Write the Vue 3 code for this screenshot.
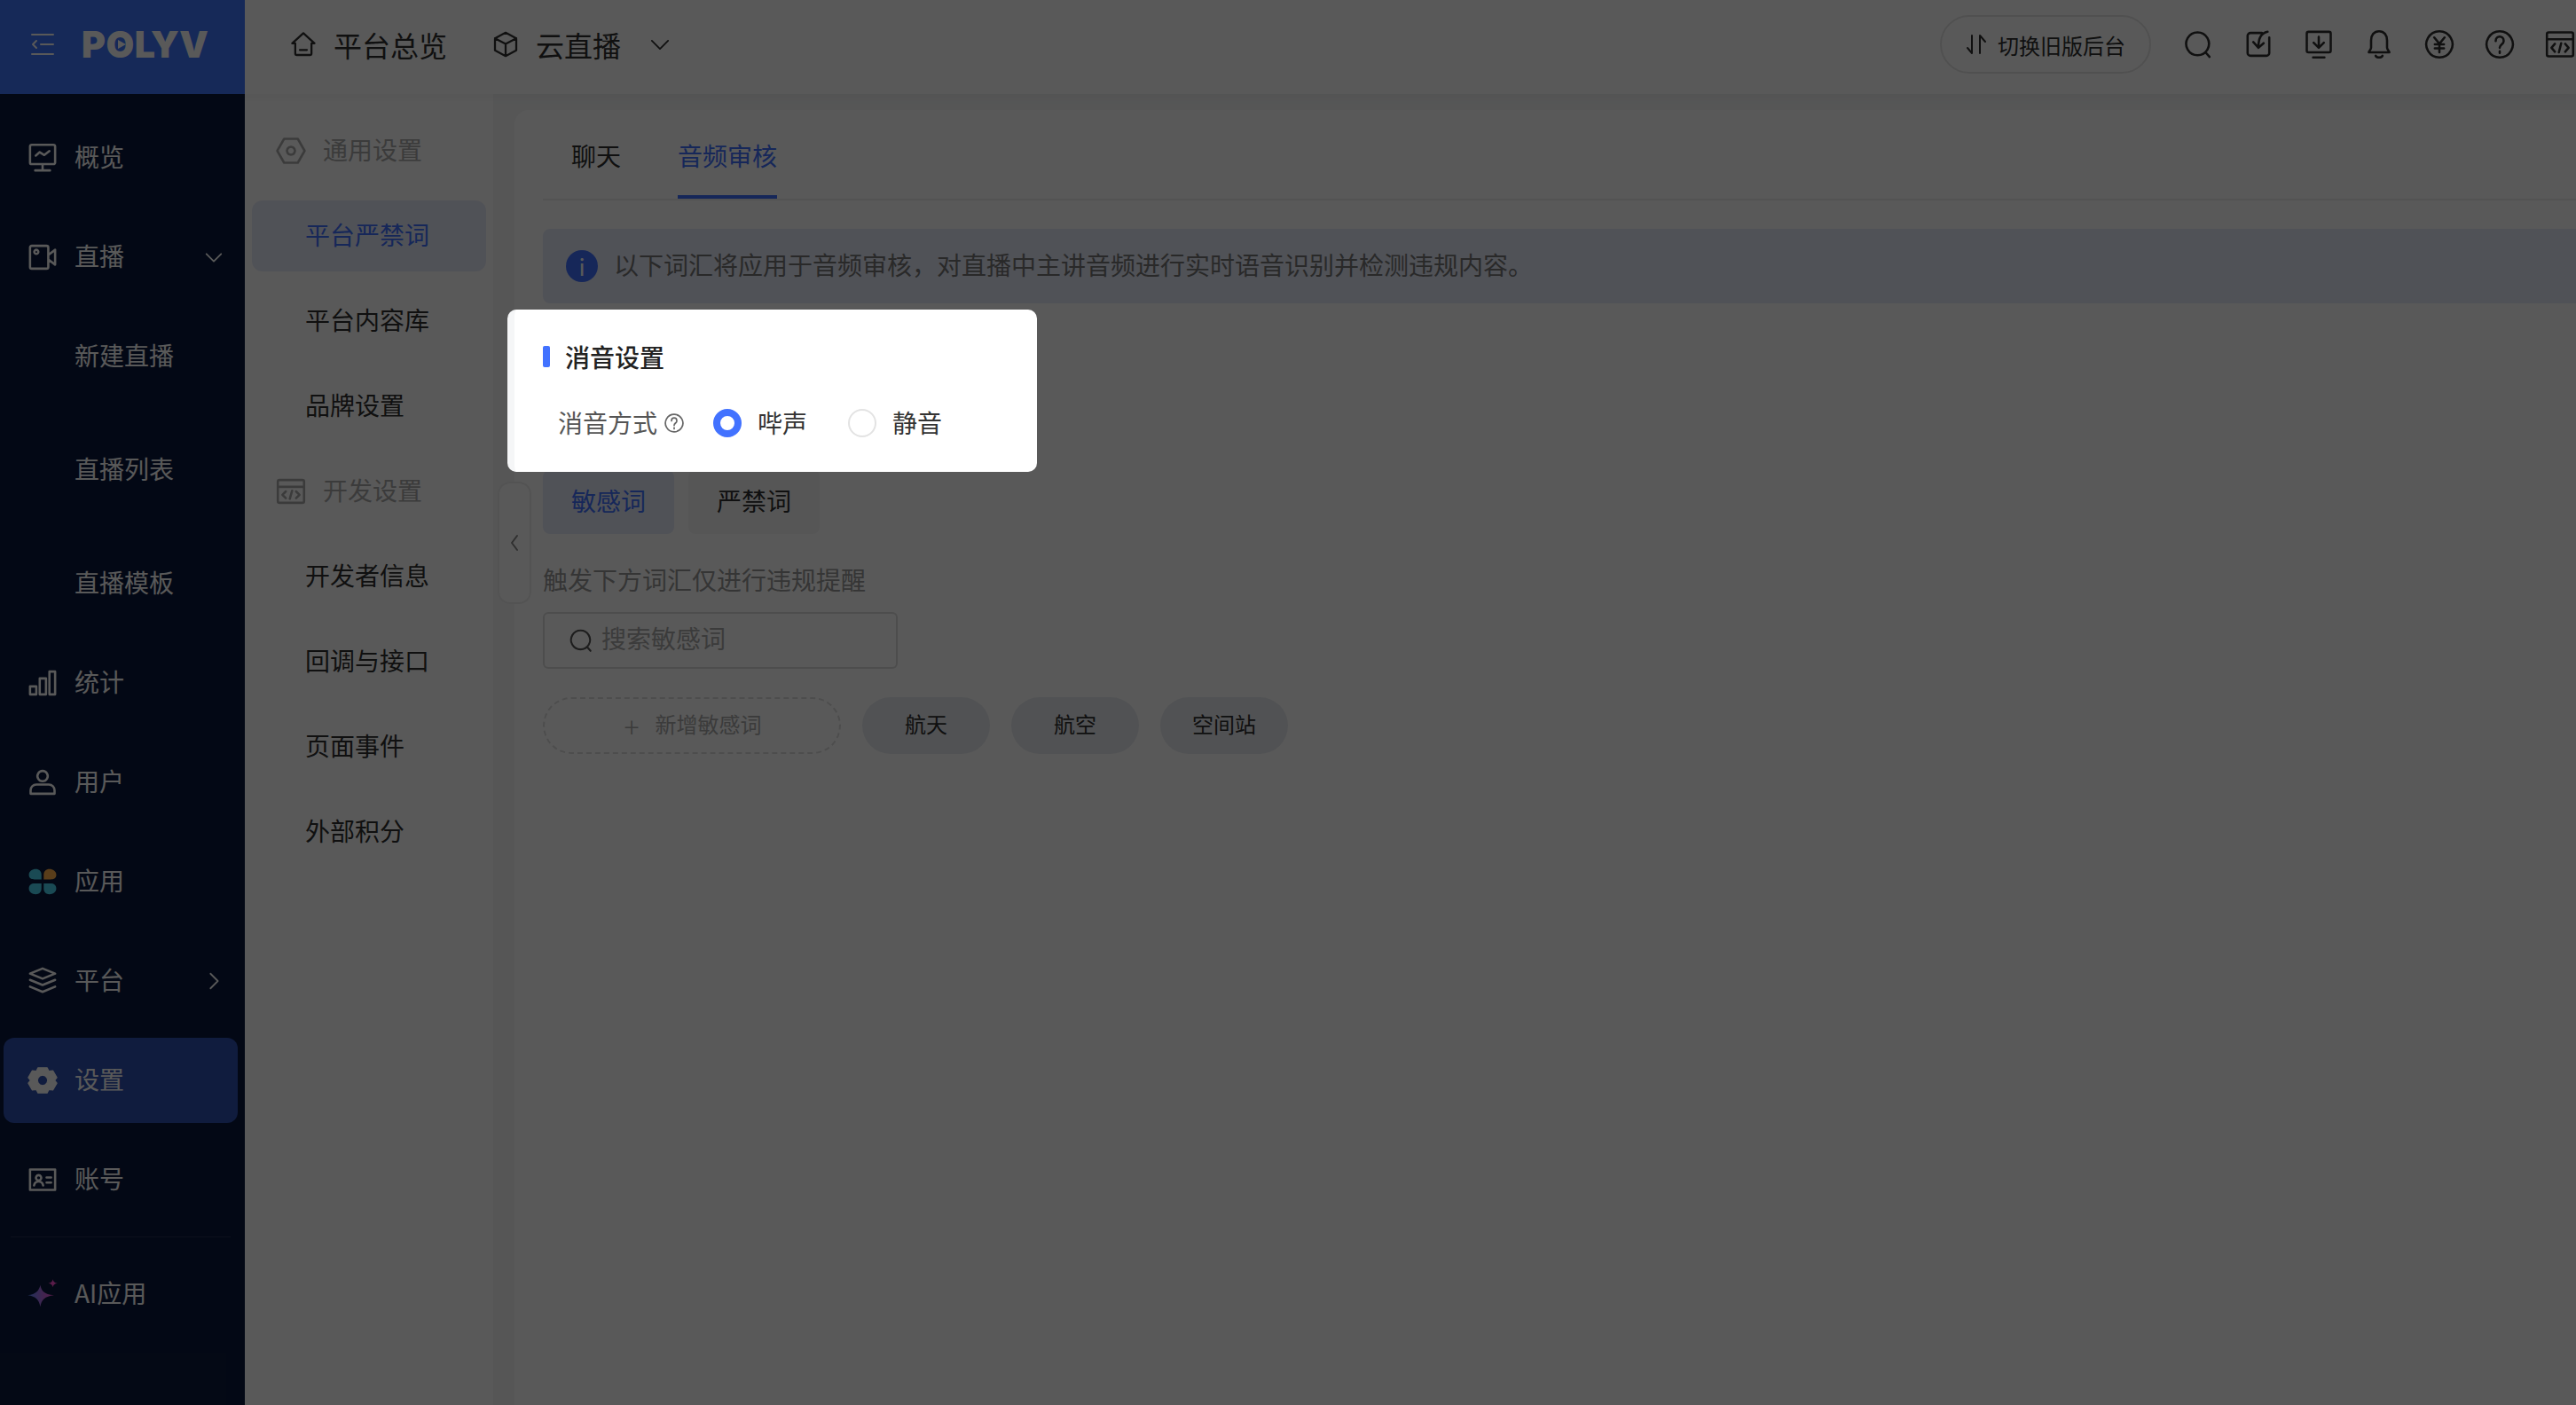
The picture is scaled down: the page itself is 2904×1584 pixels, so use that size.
<script setup>
const navTop = [
  { label: '概览', icon: 'M4.500 2.500h19a1.500 1.500 0 0 1 1.500 1.500v14a1.500 1.500 0 0 1-1.500 1.500h-19A1.500 1.500 0 0 1 3 18V4a1.500 1.500 0 0 1 1.500-1.500zM14 19.500V25M7.500 25h13M8 12l3.500-3 4 2.500 4.500-3.500' },
  { label: '直播', arrow: 'down', icon: 'M4.500 4h13a1.500 1.500 0 0 1 1.500 1.500v17a1.500 1.500 0 0 1-1.500 1.500h-13A1.500 1.500 0 0 1 3 22.500v-17A1.500 1.500 0 0 1 4.500 4zM19 12l6-4.500v13l-6-4.500M8.500 7.500a1.800 1.800 0 1 0 .01 0z' },
];
const navSub = ['新建直播', '直播列表', '直播模板'];
const navBottom = [
  { label: '统计', icon: 'M3 17h5.500v7H3zM11.500 10h5.500v14h-5.500zM20 4h5v20h-5z' },
  { label: '用户', icon: 'M14 4a4.500 4.500 0 1 0 .01 0zM3.500 24v-3a5 5 0 0 1 5-5h11a5 5 0 0 1 5 5v3z' },
  { label: '应用', kind: 'apps' },
  { label: '平台', arrow: 'right', icon: 'M14 3l11 4.500-11 4.500L3 7.500zM3 13l11 4.500L25 13M3 19l11 4.500L25 19' },
  { label: '设置', kind: 'gear', active: true },
  { label: '账号', divider: true, icon: 'M3 5h22v18H3zM10.500 10a2.300 2.300 0 1 0 .01 0zM6.500 19c.5-2.500 2-3.500 4-3.500s3.500 1 4 3.500M17.500 12h4M17.500 16.500h4' },
  { label: 'AI应用', kind: 'ai' },
];
const subGroups = [
  {
    title: '通用设置',
    icon: 'M8 3.500h12L26 14l-6 10.500H8L2 14zM14 10.500a3.500 3.500 0 1 0 .01 0z',
    items: ['平台严禁词', '平台内容库', '品牌设置'],
  },
  {
    title: '开发设置',
    icon: 'M4 4h20a1.500 1.500 0 0 1 1.500 1.500v17a1.500 1.500 0 0 1-1.500 1.500H4a1.500 1.500 0 0 1-1.500-1.500v-17A1.500 1.500 0 0 1 4 4zM2.500 10h23M9.500 14l-3 3 3 3M18.500 14l3 3-3 3M15 13.500l-2 7',
    items: ['开发者信息', '回调与接口', '页面事件', '外部积分'],
  },
];
const tools = [
  'M13.500 3.500a10 10 0 1 0 .01 0zM20.500 21l3.500 4',
  'M17 4H7a2.500 2.500 0 0 0-2.500 2.500v15A2.500 2.500 0 0 0 7 24h14a2.500 2.500 0 0 0 2.500-2.500V8M22 3c-5 1-8 5-8 13M9.500 12l4.500 5 4.500-4',
  'M5 3h18a1.500 1.500 0 0 1 1.500 1.500v15A1.500 1.500 0 0 1 23 21H5a1.500 1.500 0 0 1-1.500-1.500v-15A1.500 1.500 0 0 1 5 3zM14 7.500v9M9.500 12.500l4.500 4.500 4.500-4.500M9 25.500h10',
  'M14 2.500c-4.500 0-7 3.500-7 8v6.500c0 1.500-2 3-2 4h18c0-1-2-2.500-2-4v-6.500c0-4.500-2.500-8-7-8zM11 24c1 2 5 2 6 0',
  'M14 2.500a11.500 11.500 0 1 0 .01 0zM9.500 8l4.500 5.500L18.500 8M14 13.500V21M10 14h8M10 17.500h8',
  'M14 2.500a11.500 11.500 0 1 0 .01 0zM10.500 11c0-5 7-5 7 0 0 3-3.500 3-3.500 6M14 20v1.500',
  'M4 3.500h20a1.500 1.500 0 0 1 1.500 1.500v18a1.500 1.500 0 0 1-1.500 1.500H4A1.500 1.500 0 0 1 2.500 23V5A1.500 1.500 0 0 1 4 3.500zM2.500 9.500h23M9.500 13.500l-3 3.500 3 3.500M18.500 13.500l3 3.500-3 3.500M15 13l-2 8',
];
const words = ['航天', '航空', '空间站'];
</script>

<template>
  <div class="page">
    <header class="topbar">
      <div class="brand">
        <svg class="menu-icon" viewBox="0 0 26 24">
          <path d="M1 1h24M11 12h14M1 23h24M6 8l-4 4 4 4" />
        </svg>
        <span class="logo">POLYV<i class="logo-play"></i></span>
      </div>
      <div class="crumb">
        <svg class="crumb-icon" viewBox="0 0 28 28"><path d="M14 3L3 13h3v10a1.500 1.500 0 0 0 1.500 1.500h13A1.500 1.500 0 0 0 22 23V13h3zM10.500 19.500h7" /></svg>
        <span>平台总览</span>
      </div>
      <div class="crumb crumb-second">
        <svg class="crumb-icon" viewBox="0 0 28 28"><path d="M14 2.500l10.500 5.500v12L14 25.500 3.500 20V8zM3.500 8L14 13.500 24.500 8M14 13.500v12" /></svg>
        <span>云直播</span>
        <svg class="crumb-arrow" viewBox="0 0 24 14"><path d="M2 2l10 10L22 2" /></svg>
      </div>
      <div class="top-tools">
        <button class="switch-btn">
          <svg viewBox="0 0 24 24"><path d="M7 2v20L2 16M16 22V2l6 7" /></svg>
          <span>切换旧版后台</span>
        </button>
        <svg v-for="(d, i) in tools" :key="i" class="tool-icon" viewBox="0 0 28 28"><path :d="d" /></svg>
      </div>
    </header>

    <div class="body">
      <aside class="sidebar">
        <div v-for="item in navTop" :key="item.label" class="nav-item">
          <svg class="nav-icon" viewBox="0 0 28 28"><path :d="item.icon" /></svg>
          <span class="nav-text">{{ item.label }}</span>
          <svg v-if="item.arrow" class="nav-arrow" viewBox="0 0 24 24"><path d="M3 8l9 9 9-9" /></svg>
        </div>
        <div class="nav-subs">
          <div v-for="sub in navSub" :key="sub" class="nav-sub">{{ sub }}</div>
        </div>
        <template v-for="item in navBottom" :key="item.label">
          <div class="nav-item" :class="{ active: item.active }">
            <svg v-if="item.kind === 'apps'" class="nav-icon" viewBox="0 0 28 28">
              <path fill="#4ad4f0" stroke="none" d="M2 8c0-3 3-5 6-5s5 2 5 5v4H7c-3 0-5-1-5-4zM2 20c0-3 2-4.500 5-4.500h6V20c0 3-2 5-5 5s-6-2-6-5zM15 15.500h6c3 0 5 1.500 5 4.500s-3 5-6 5-5-2-5-5z" />
              <path fill="#ffb04a" stroke="none" d="M15 12V8c0-3 2-5 5-5s6 2 6 5-2 4-5 4z" />
            </svg>
            <svg v-else-if="item.kind === 'gear'" class="nav-icon" viewBox="0 0 28 28">
              <path fill="currentColor" fill-rule="evenodd" stroke-width="1" d="M10 3h8l1.500 3 3.500-.5 3.500 6-2 2.500 2 2.500-3.500 6-3.500-.5L18 25h-8l-1.500-3-3.500.5-3.500-6 2-2.500-2-2.500 3.500-6 3.500.5zM14 9.500a4.500 4.500 0 1 0 .01 0z" />
            </svg>
            <svg v-else-if="item.kind === 'ai'" class="nav-icon" viewBox="0 0 28 28">
              <defs>
                <linearGradient id="aiStar" x1="0" y1="0" x2="1" y2="0">
                  <stop offset="0" stop-color="#5a8cff" />
                  <stop offset="1" stop-color="#ff50d0" />
                </linearGradient>
              </defs>
              <path fill="url(#aiStar)" stroke="none" d="M12 6c1 5 3 8 12 9-8 1-11 4-12 10-1-6-4-9-11-10 7-1 10-4 11-9z" />
              <path fill="#ff50d0" stroke="none" d="M23 1c.4 2 1.400 3 4 3.500-2.600.5-3.600 1.500-4 3.500-.4-2-1.400-3-4-3.500 2.600-.5 3.600-1.500 4-3.500z" />
            </svg>
            <svg v-else class="nav-icon" viewBox="0 0 28 28"><path :d="item.icon" /></svg>
            <span class="nav-text">{{ item.label }}</span>
            <svg v-if="item.arrow" class="nav-arrow" viewBox="0 0 24 24"><path d="M8 3l9 9-9 9" /></svg>
          </div>
          <div v-if="item.divider" class="nav-divider"></div>
        </template>
      </aside>

      <nav class="subnav">
        <template v-for="group in subGroups" :key="group.title">
          <div class="sub-title">
            <svg viewBox="0 0 28 28"><path :d="group.icon" /></svg>
            <span class="nav-text">{{ group.title }}</span>
          </div>
          <div v-for="name in group.items" :key="name" class="sub-item" :class="{ active: name === '平台严禁词' }">{{ name }}</div>
        </template>
      </nav>

      <main class="main">
        <div class="collapse-handle">
          <svg viewBox="0 0 10 20"><path d="M8 2L2 10l6 8" /></svg>
        </div>
        <section class="panel">
          <div class="tabs">
            <div class="tab">聊天</div>
            <div class="tab active">音频审核</div>
          </div>
          <div class="alert">
            <span class="alert-icon">i</span>
            <span class="alert-text">以下词汇将应用于音频审核，对直播中主讲音频进行实时语音识别并检测违规内容。</span>
          </div>
          <div class="word-switch">
            <div class="word-btn active">敏感词</div>
            <div class="word-btn">严禁词</div>
          </div>
          <p class="hint">触发下方词汇仅进行违规提醒</p>
          <div class="search">
            <svg viewBox="0 0 28 28"><path d="M13.500 3.500a10 10 0 1 0 .01 0zM20.500 21l3.500 4" /></svg>
            <span>搜索敏感词</span>
          </div>
          <div class="tag-row">
            <div class="tag-add"><span class="plus">+</span><span class="add-text">新增敏感词</span></div>
            <div v-for="w in words" :key="w" class="tag">{{ w }}</div>
          </div>
        </section>
      </main>
    </div>

    <div class="mask"></div>

    <div class="popover">
      <div class="pop-title">消音设置</div>
      <div class="pop-row">
        <span class="pop-label">消音方式</span>
        <svg class="pop-help" viewBox="0 0 28 28"><path d="M14 2.500a11.500 11.500 0 1 0 .01 0zM10.500 11c0-5 7-5 7 0 0 3-3.500 3-3.500 6M14 20v1.500" /></svg>
        <label class="radio checked"><i></i><span>哔声</span></label>
        <label class="radio"><i></i><span>静音</span></label>
      </div>
    </div>
  </div>
</template>

<style>
html, body {
  margin: 0;
  overflow: hidden;
  background: #fff;
}
</style>

<style scoped>
.page {
  width: 2904px;
  height: 1584px;
  display: flex;
  flex-direction: column;
  overflow: hidden;
  position: relative;
  font-family: "Noto Sans CJK SC", "Noto Sans", sans-serif;
  font-size: 28px;
  color: #303030;
}

svg {
  fill: none;
  stroke: currentColor;
  stroke-width: 2;
  stroke-linecap: round;
  stroke-linejoin: round;
  flex: none;
}

/* 顶栏 */
.topbar {
  height: 106px;
  box-sizing: border-box;
  padding-bottom: 6px;
  display: flex;
  align-items: center;
  flex: none;
  background: #fff;
  position: relative;
  z-index: 1;
  box-shadow: 0 2px 12px rgba(0, 0, 0, 0.05);
}
.brand {
  width: 276px;
  height: 106px;
  margin-bottom: -6px;
  flex: none;
  background: #4075fd;
  display: flex;
  align-items: center;
  color: #fff;
  padding: 0 0 6px 35px;
  box-sizing: border-box;
}
.menu-icon {
  width: 26px;
  height: 24px;
}
.logo {
  position: relative;
  margin-left: 31px;
  font-family: Inter, sans-serif;
  font-weight: 900;
  font-size: 41px;
  line-height: 40px;
  letter-spacing: 0.5px;
}
.logo-play {
  position: absolute;
  left: 41px;
  top: 15px;
  border-left: 9px solid #fff;
  border-top: 5px solid transparent;
  border-bottom: 5px solid transparent;
}
.crumb {
  display: flex;
  align-items: center;
  font-size: 32px;
  margin-left: 50px;
  gap: 18px;
}
.crumb-second {
  margin-left: 50px;
}
.crumb-icon {
  width: 32px;
  height: 32px;
}
.crumb-arrow {
  width: 22px;
  height: 13px;
  margin-left: 15px;
}
.top-tools {
  margin-left: auto;
  display: flex;
  align-items: center;
  gap: 32px;
  margin-right: 0;
}
.switch-btn {
  width: 238px;
  height: 66px;
  margin-right: 3px;
  display: flex;
  align-items: center;
  justify-content: center;
  gap: 12px;
  padding: 0;
  border: 2px solid #e6e6e6;
  border-radius: 33px;
  background: #fff;
  color: #303030;
  font: inherit;
  font-size: 24px;
}
.switch-btn svg {
  width: 24px;
  height: 24px;
}
.tool-icon {
  width: 36px;
  height: 36px;
}

.body {
  flex: 1;
  display: flex;
  min-height: 0;
}

/* 字形偏低，底部留白让文字上提 */
.nav-text {
  padding-bottom: 4px;
}

/* 主导航 */
.sidebar {
  width: 276px;
  flex: none;
  box-sizing: border-box;
  padding-top: 24px;
  background: #0b193d;
  color: #fff;
}
.nav-item {
  width: 264px;
  height: 96px;
  margin: 0 0 16px 4px;
  padding: 0 16px 0 26px;
  box-sizing: border-box;
  display: flex;
  align-items: center;
  gap: 18px;
  border-radius: 12px;
}
.nav-item.active {
  background: #2f50b2;
}
.nav-icon {
  width: 36px;
  height: 36px;
}
.nav-arrow {
  width: 22px;
  height: 22px;
  margin-left: auto;
}
.nav-subs {
  display: flex;
  flex-direction: column;
  gap: 32px;
  margin-bottom: 16px;
}
.nav-sub {
  height: 96px;
  padding-left: 84px;
  line-height: 92px;
}
.nav-divider {
  height: 1px;
  margin: 0 16px 16px 12px;
  background: rgba(255, 255, 255, 0.1);
}

/* 二级导航 */
.subnav {
  width: 280px;
  flex: none;
  box-sizing: border-box;
  padding: 24px 8px 0;
  background: #fff;
}
.sub-title,
.sub-item {
  height: 80px;
  margin-bottom: 16px;
  box-sizing: border-box;
  display: flex;
  align-items: center;
  border-radius: 12px;
}
.sub-title {
  color: #aaa;
  padding-left: 26px;
  gap: 18px;
}
.sub-title svg {
  width: 36px;
  height: 36px;
}
.sub-item {
  padding: 0 0 4px 60px;
  color: #303030;
}
.sub-item.active {
  background: #e6eaf8;
  color: #4070ff;
}

/* 内容区 */
.main {
  flex: 1;
  min-width: 0;
  display: flex;
  padding: 18px 0 0 24px;
  background: #f5f6f7;
  position: relative;
}
.collapse-handle {
  position: absolute;
  left: 5px;
  top: 437px;
  width: 38px;
  height: 138px;
  box-sizing: border-box;
  display: flex;
  align-items: center;
  justify-content: center;
  background: #fff;
  border: 2px solid #eee;
  border-radius: 14px;
  color: #888;
}
.collapse-handle svg {
  width: 10px;
  height: 20px;
}
.panel {
  flex: 1;
  padding-left: 32px;
  background: #fff;
  border-top-left-radius: 16px;
}
.tabs {
  height: 102px;
  box-sizing: border-box;
  padding-left: 32px;
  display: flex;
  gap: 64px;
  border-bottom: 2px solid #eee;
}
.tab {
  height: 100px;
  box-sizing: border-box;
  padding-top: 31px;
  line-height: 40px;
}
.tab.active {
  color: #4070ff;
  border-bottom: 4px solid #4070ff;
}
.alert {
  height: 84px;
  margin-top: 32px;
  padding-left: 26px;
  display: flex;
  align-items: center;
  gap: 18px;
  background: #e6eaf8;
  border-radius: 8px 0 0 8px;
}
.alert-icon {
  width: 36px;
  height: 36px;
  border-radius: 50%;
  background: #4070ff;
  color: #fff;
  font-size: 26px;
  line-height: 36px;
  text-align: center;
}
.alert-text {
  padding-bottom: 4px;
  color: #777;
}
/* 敏感词区块，上方被引导浮层遮住 */
.word-switch {
  margin-top: 188px;
  display: flex;
  gap: 16px;
}
.word-btn {
  width: 148px;
  height: 72px;
  line-height: 68px;
  text-align: center;
  background: #f5f6f7;
  border-radius: 8px;
}
.word-btn.active {
  background: #e6eaf8;
  color: #4070ff;
}
.hint {
  margin: 31px 0 0;
  line-height: 40px;
  color: #999;
}
.search {
  width: 400px;
  height: 64px;
  margin-top: 17px;
  box-sizing: border-box;
  padding-left: 26px;
  display: flex;
  align-items: center;
  gap: 8px;
  border: 2px solid #ddd;
  border-radius: 6px;
  color: #aaa;
}
.search span {
  padding-bottom: 6px;
}
.search svg {
  width: 30px;
  height: 30px;
  color: #555;
}
.tag-row {
  margin-top: 32px;
  display: flex;
  gap: 24px;
  font-size: 24px;
}
.tag-add {
  width: 336px;
  height: 64px;
  box-sizing: border-box;
  padding-left: 2px;
  display: flex;
  align-items: center;
  justify-content: center;
  gap: 18px;
  border: 2px dashed #ddd;
  border-radius: 32px;
  color: #aaa;
}
.add-text {
  padding-bottom: 6px;
}
.plus {
  font-size: 32px;
  line-height: 32px;
  font-weight: 300;
}
.tag {
  min-width: 144px;
  height: 64px;
  line-height: 60px;
  text-align: center;
  background: #e8ebf0;
  border-radius: 32px;
}

/* 遮罩与高亮浮层 */
.mask {
  position: absolute;
  inset: 0;
  z-index: 2;
  background: rgba(0, 0, 0, 0.65);
}
.popover {
  position: absolute;
  z-index: 3;
  left: 572px;
  top: 349px;
  width: 597px;
  height: 183px;
  box-sizing: border-box;
  padding: 30px 0 0 32px;
  background: #fff;
  border-left: 8px solid #f5f6f7;
  border-radius: 10px;
}
.pop-title {
  display: flex;
  align-items: center;
  gap: 17px;
  height: 46px;
  font-weight: 500;
  color: #222;
}
.pop-title::before {
  content: "";
  width: 8px;
  height: 24px;
  background: #4272ff;
  border-radius: 2px;
}
.pop-row {
  margin-top: 32px;
  padding-left: 17px;
  height: 40px;
  display: flex;
  align-items: center;
}
.pop-label {
  color: #555;
  padding-bottom: 2px;
}
.pop-help {
  width: 24px;
  height: 24px;
  margin-left: 7px;
  color: #666;
}
.radio {
  display: flex;
  align-items: center;
  gap: 18px;
  color: #333;
  margin-left: 32px;
}
.radio + .radio {
  margin-left: 46px;
}
.radio span {
  padding-bottom: 2px;
}
.radio i {
  width: 32px;
  height: 32px;
  box-sizing: border-box;
  border: 2px solid #e3e3e3;
  border-radius: 50%;
}
.radio.checked i {
  border: 8px solid #4272ff;
}
</style>
